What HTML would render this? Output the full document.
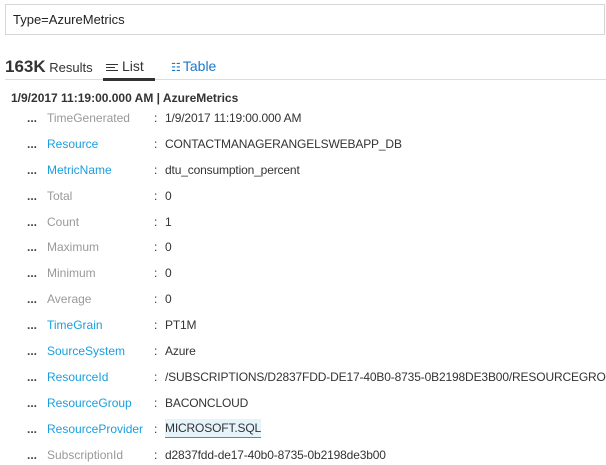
<!DOCTYPE html>
<html><head><style>
body{margin:0;width:606px;height:465px;overflow:hidden;background:#fff;font-family:"Liberation Sans",sans-serif;color:#333;position:relative}
.s{position:absolute;left:5px;top:4px;width:600px;height:31px;border:1px solid #d6d6d6;box-sizing:border-box;font-size:13px;line-height:29px;padding-left:7px;color:#222}
.t{position:absolute;top:57px;font-size:13px;color:#333}
.hl{position:absolute;left:5px;top:79px;width:601px;height:1px;background:#ddd}
.ul{position:absolute;left:103px;top:78px;width:52px;height:3px;background:#333}
.h{position:absolute;left:11px;top:91px;font-size:12px;font-weight:bold;color:#333}
.r{position:absolute;left:0;width:606px;overflow:hidden;height:20px;font-size:12px;line-height:20px;white-space:nowrap}
.r b{position:absolute;left:27px;font-weight:bold;color:#444}
.r .k{position:absolute;left:47px}
.r .c{position:absolute;left:154px;color:#333}
.r .v{position:absolute;left:165px;color:#333;letter-spacing:-0.15px}
.g{color:#999}.bl{color:#1a9ede}
</style></head><body>
<div class="s">Type=AzureMetrics</div>
<div class="t" style="left:5px"><span style="font-size:17px;font-weight:bold">163K</span> Results</div>
<div class="t" style="left:106px;top:58px;font-size:14px"><span style="display:inline-block;width:12px;vertical-align:middle;margin-right:4px"><span style="display:block;height:1px;background:#333;margin:2px 0"></span><span style="display:block;height:1px;background:#333;width:9px;margin:2px 0"></span><span style="display:block;height:1px;background:#333;margin:2px 0"></span></span>List</div>
<div class="t" style="left:171px;top:58px;font-size:14px;color:#1a7ac8"><span style="font-size:11px;letter-spacing:-1px;margin-right:3px">☷</span>Table</div>
<div class="hl"></div><div class="ul"></div>
<div class="h">1/9/2017 11:19:00.000 AM | AzureMetrics</div>
<div class="r" style="top:108px"><b>...</b><span class="k g">TimeGenerated</span><span class="c">:</span><span class="v">1/9/2017 11:19:00.000 AM</span></div>
<div class="r" style="top:134px"><b>...</b><span class="k bl">Resource</span><span class="c">:</span><span class="v">CONTACTMANAGERANGELSWEBAPP_DB</span></div>
<div class="r" style="top:160px"><b>...</b><span class="k bl">MetricName</span><span class="c">:</span><span class="v">dtu_consumption_percent</span></div>
<div class="r" style="top:186px"><b>...</b><span class="k g">Total</span><span class="c">:</span><span class="v">0</span></div>
<div class="r" style="top:212px"><b>...</b><span class="k g">Count</span><span class="c">:</span><span class="v">1</span></div>
<div class="r" style="top:237px"><b>...</b><span class="k g">Maximum</span><span class="c">:</span><span class="v">0</span></div>
<div class="r" style="top:263px"><b>...</b><span class="k g">Minimum</span><span class="c">:</span><span class="v">0</span></div>
<div class="r" style="top:289px"><b>...</b><span class="k g">Average</span><span class="c">:</span><span class="v">0</span></div>
<div class="r" style="top:315px"><b>...</b><span class="k bl">TimeGrain</span><span class="c">:</span><span class="v">PT1M</span></div>
<div class="r" style="top:341px"><b>...</b><span class="k bl">SourceSystem</span><span class="c">:</span><span class="v">Azure</span></div>
<div class="r" style="top:367px"><b>...</b><span class="k bl">ResourceId</span><span class="c">:</span><span class="v">/SUBSCRIPTIONS/D2837FDD-DE17-40B0-8735-0B2198DE3B00/RESOURCEGROUPS/</span></div>
<div class="r" style="top:393px"><b>...</b><span class="k bl">ResourceGroup</span><span class="c">:</span><span class="v">BACONCLOUD</span></div>
<div class="r" style="top:419px"><b>...</b><span class="k bl">ResourceProvider</span><span class="c">:</span><span class="v" style="background:#e5f3fb;border-bottom:1px solid #1a9ede;line-height:18px">MICROSOFT.SQL</span></div>
<div class="r" style="top:445px"><b>...</b><span class="k g">SubscriptionId</span><span class="c">:</span><span class="v">d2837fdd-de17-40b0-8735-0b2198de3b00</span></div>
</body></html>
